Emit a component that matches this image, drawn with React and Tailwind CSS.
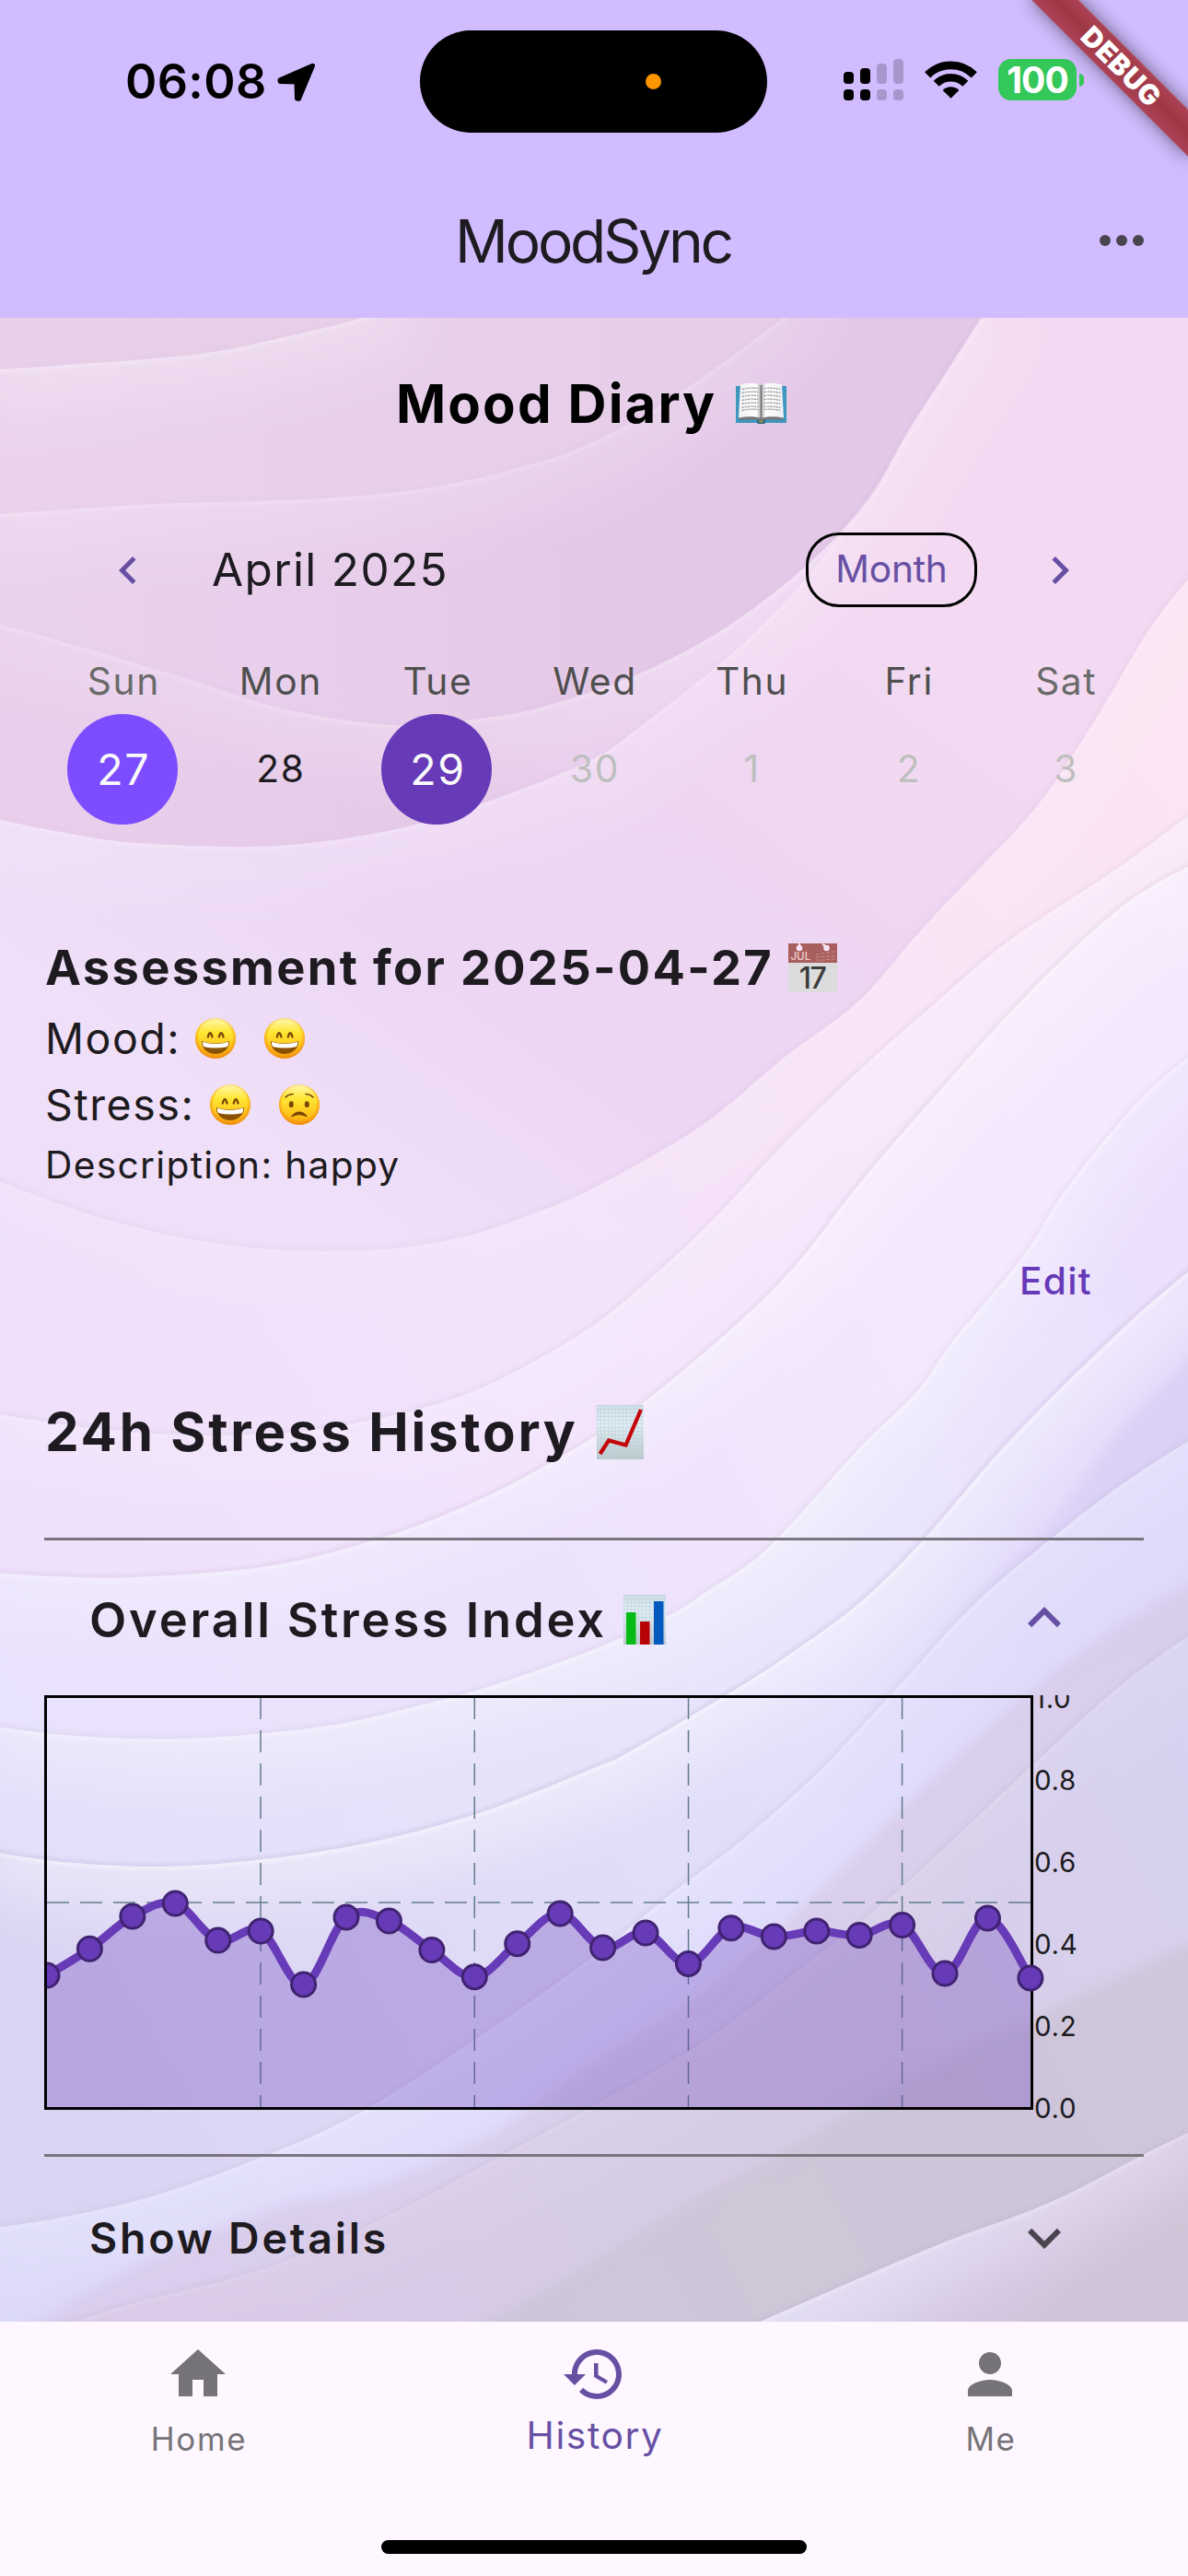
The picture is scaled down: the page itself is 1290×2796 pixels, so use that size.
import { useId } from "react";

/* ---------- wallpaper ---------- */

const smooth = (pts) => {
  let d = `M${pts[0][0]} ${pts[0][1]}`;
  for (let i = 0; i < pts.length - 1; i++) {
    const p0 = pts[i - 1] || pts[i];
    const p1 = pts[i];
    const p2 = pts[i + 1];
    const p3 = pts[i + 2] || p2;
    d += ` C${p1[0] + (p2[0] - p0[0]) / 6} ${p1[1] + (p2[1] - p0[1]) / 6} ${p2[0] - (p3[0] - p1[0]) / 6} ${p2[1] - (p3[1] - p1[1]) / 6} ${p2[0]} ${p2[1]}`;
  }
  return d;
};

// Each sheet starts at its upper edge (left to right) and runs on to the bottom right.
const SHEETS = [
  {
    pts: [[-20, 402], [60, 397], [210, 385], [300, 368], [400, 343], [440, 325]],
    g: [0, 0, 1290, 0],
    c: ["#ebd3ed", "#e8d0ea", "#e6cde8", "#e6cde8"],
    hi: 0.3,
    sh: 0.02,
  },
  {
    pts: [[-20, 559], [60, 554], [170, 547], [350, 541], [480, 527], [600, 497], [680, 462], [755, 415], [850, 345], [880, 318]],
    g: [0, 600, 900, 560],
    c: ["#ead3ed", "#e8cfeb", "#e5cae8", "#e3c8e7"],
    hi: 0.22,
    sh: 0.02,
  },
  {
    pts: [[-20, 672], [80, 700], [200, 736], [310, 770], [430, 787], [520, 780], [590, 767], [690, 733], [790, 680], [880, 610], [944, 540], [985, 470], [1030, 400], [1075, 330]],
    g: [0, 800, 1290, 480],
    c: ["#e9cfeb", "#e6cbe9", "#eed6f1", "#f4daf1"],
    hi: 0.22,
    sh: 0.02,
  },
  {
    pts: [[-20, 885], [60, 902], [150, 915], [300, 918], [430, 900], [530, 870], [640, 826], [700, 785], [800, 705], [870, 634], [910, 584], [946, 540], [987, 470], [1032, 400], [1077, 330]],
    g: [400, 1300, 900, 600],
    c: ["#f0dff8", "#ecd6f3", "#efd7f2", "#f3daf2"],
    hi: 0.2,
    sh: 0.02,
  },
  {
    pts: [[-20, 1275], [120, 1325], [260, 1353], [400, 1357], [500, 1343], [577, 1318], [645, 1289], [760, 1223], [851, 1148], [933, 1086], [1003, 1006], [1066, 940], [1130, 870], [1190, 780], [1250, 680], [1310, 605]],
    g: [100, 1560, 1200, 780],
    c: ["#f0e0fa", "#f3e2fa", "#f7e3f7", "#fbe5f4"],
    hi: 0.08,
    sh: 0.04,
  },
  {
    pts: [[-20, 1532], [100, 1550], [220, 1558], [340, 1552], [460, 1528], [543, 1497], [645, 1438], [727, 1369], [781, 1317], [851, 1242], [933, 1162], [1003, 1100], [1097, 1020], [1217, 940], [1310, 870]],
    g: [100, 1700, 1250, 900],
    c: ["#efe1fb", "#f3e4fc", "#f7e7fb", "#fae8f9"],
    hi: 0.16,
    sh: 0.06,
  },
  {
    pts: [[-20, 1706], [60, 1711], [145, 1712], [291, 1700], [412, 1670], [509, 1633], [606, 1583], [698, 1523], [810, 1428], [871, 1365], [933, 1285], [1015, 1190], [1118, 1077], [1221, 982], [1310, 930]],
    g: [0, 1820, 1290, 1050],
    c: ["#e9e2fc", "#ece2fc", "#f4e7fd", "#f6e9fd"],
    hi: 0.35,
    sh: 0.08,
  },
  {
    pts: [[-20, 1872], [80, 1884], [206, 1887], [350, 1874], [452, 1852], [533, 1830], [645, 1790], [727, 1753], [768, 1727], [834, 1680], [933, 1572], [995, 1511], [1036, 1454], [1110, 1365], [1159, 1289], [1241, 1190], [1310, 1132]],
    g: [0, 1950, 1290, 1300],
    c: ["#e3dffa", "#e6e2fa", "#eae6fc", "#ecdffc"],
    hi: 0.4,
    sh: 0.06,
  },
  {
    pts: [[-20, 2008], [80, 2022], [206, 2025], [370, 2006], [514, 1970], [645, 1919], [686, 1900], [785, 1842], [851, 1800], [933, 1740], [1003, 1671], [1097, 1563], [1221, 1440], [1310, 1364]],
    g: [0, 2250, 1290, 1500],
    c: ["#dad4f3", "#dfdaf6", "#e4e1fb", "#e5dafa"],
    hi: 0.5,
    sh: 0.1,
  },
  {
    pts: [[780, 2010], [892, 1916], [974, 1830], [1056, 1735], [1139, 1655], [1215, 1555], [1310, 1460]],
    g: [780, 1900, 1290, 1550],
    c: ["#dfdbf8", "#e0dbf9", "#dcd2f7", "#dad0f5"],
    hi: 0,
    sh: 0,
    soft: true,
  },
  {
    pts: [[-20, 2420], [60, 2408], [165, 2384], [288, 2340], [391, 2293], [514, 2215], [645, 2123], [727, 2057], [810, 1994], [892, 1920], [974, 1832], [1056, 1743], [1134, 1676], [1220, 1610], [1310, 1552]],
    g: [100, 2520, 1290, 1640],
    c: ["#dcdaf8", "#e0dcfc", "#e0dcfb", "#dfdafa"],
    hi: 0.2,
    sh: 0.05,
  },
  {
    pts: [[20, 2530], [144, 2462], [288, 2400], [411, 2372], [535, 2315], [645, 2238], [768, 2160], [892, 2050], [982, 1960], [1080, 1868], [1190, 1780], [1310, 1705]],
    g: [200, 2520, 1290, 1740],
    c: ["#dacded", "#d9cfeb", "#d9cfec", "#d9cdec"],
    hi: 0,
    sh: 0,
    soft: true,
  },
  {
    pts: [[50, 2530], [144, 2500], [288, 2462], [411, 2410], [535, 2345], [645, 2285], [768, 2213], [892, 2119], [982, 2046], [1122, 1915], [1221, 1826], [1310, 1762]],
    g: [200, 2520, 1290, 1900],
    c: ["#dac8e7", "#d7cce6", "#d7cde7", "#d8d2f0"],
    hi: 0.1,
    sh: 0.05,
  },
  {
    pts: [[500, 2535], [645, 2454], [727, 2402], [851, 2334], [995, 2250], [1139, 2182], [1310, 2100]],
    g: [560, 2520, 1290, 2140],
    c: ["#cdc6da", "#cfc6d8", "#cec5d9", "#d0c7dc"],
    hi: 0,
    sh: 0,
    soft: true,
  },
  {
    pts: [[780, 2540], [871, 2500], [1015, 2438], [1139, 2391], [1241, 2339], [1310, 2305]],
    g: [960, 2400, 1100, 2560],
    c: ["#dcd6f0", "#d9d0ec", "#d6c8e3", "#d0c4d8"],
    hi: 0.28,
    sh: 0.04,
  },
];

function Wallpaper() {
  return (
    <svg aria-hidden="true" className="absolute inset-0 h-full w-full" viewBox="0 345 1290 2175" preserveAspectRatio="none">
      <defs>
        <filter id="wide" filterUnits="userSpaceOnUse" x="-200" y="100" width="1700" height="2700">
          <feGaussianBlur stdDeviation="28" />
        </filter>
        <filter id="line" filterUnits="userSpaceOnUse" x="-200" y="100" width="1700" height="2700">
          <feGaussianBlur stdDeviation="1.8" />
        </filter>
        <filter id="mist" filterUnits="userSpaceOnUse" x="-200" y="100" width="1700" height="2700">
          <feGaussianBlur stdDeviation="8" />
        </filter>
        <linearGradient id="base" gradientUnits="userSpaceOnUse" x1="0" y1="0" x2="1290" y2="0">
          <stop offset="0" stopColor="#e8d0e9" />
          <stop offset="0.5" stopColor="#e7cfe8" />
          <stop offset="0.75" stopColor="#ebd3ed" />
          <stop offset="1" stopColor="#f4daf1" />
        </linearGradient>
        {SHEETS.map((s, i) => (
          <linearGradient key={i} id={`g${i}`} gradientUnits="userSpaceOnUse" x1={s.g[0]} y1={s.g[1]} x2={s.g[2]} y2={s.g[3]}>
            {s.c.map((c, k) => (
              <stop key={k} offset={k / 3} stopColor={c} />
            ))}
          </linearGradient>
        ))}
        {SHEETS.map((s, i) => (
          <clipPath key={i} id={`c${i}`}>
            <path d={`${smooth(s.pts)} L1400 300 L1400 2700 L-60 2700 Z`} />
          </clipPath>
        ))}
      </defs>
      <rect x="0" y="345" width="1290" height="2175" fill="url(#base)" />
      {SHEETS.map((s, i) => {
        const d = smooth(s.pts);
        return (
          <g key={i}>
            {s.sh > 0 && <path d={d} fill="none" stroke="#7a6490" strokeOpacity={s.sh} strokeWidth="8" filter="url(#line)" />}
            <path d={`${d} L1400 300 L1400 2700 L-60 2700 Z`} fill={`url(#g${i})`} filter={s.soft ? "url(#mist)" : undefined} />
            {s.hi > 0 && (
              <g clipPath={`url(#c${i})`}>
                <path d={d} fill="none" stroke="#fff" strokeOpacity={s.hi * 0.75} strokeWidth="90" filter="url(#wide)" />
                <path d={d} fill="none" stroke="#fff" strokeOpacity={s.hi * 0.7} strokeWidth="8" filter="url(#line)" />
              </g>
            )}
          </g>
        );
      })}
    </svg>
  );
}

/* ---------- icons ---------- */

function Icon({ d, className }) {
  return (
    <svg viewBox="0 0 24 24" className={className} fill="currentColor" aria-hidden="true">
      <path d={d} />
    </svg>
  );
}

const LEFT = "M15.41 7.41 14 6l-6 6 6 6 1.41-1.41L10.83 12z";
const RIGHT = "M10 6 8.59 7.41 13.17 12l-4.58 4.59L10 18l6-6z";
const UP = "m12 8-6 6 1.41 1.41L12 10.83l4.59 4.58L18 14z";
const DOWN = "M16.59 8.59 12 13.17 7.41 8.59 6 10l6 6 6-6z";
const HOME = "M10 20v-6h4v6h5v-8h3L12 3 2 12h3v8z";
const HISTORY =
  "M13 3c-4.97 0-9 4.03-9 9H1l3.89 3.89.07.14L9 12H6c0-3.87 3.13-7 7-7s7 3.13 7 7-3.13 7-7 7c-1.93 0-3.68-.79-4.94-2.06l-1.42 1.42C8.27 19.99 10.51 21 13 21c4.97 0 9-4.03 9-9s-4.03-9-9-9zm-1 5v5l4.28 2.54.72-1.21-3.5-2.08V8H12z";
const PERSON =
  "M12 12c2.21 0 4-1.79 4-4s-1.79-4-4-4-4 1.79-4 4 1.79 4 4 4zm0 2c-2.67 0-8 1.34-8 4v2h16v-2c0-2.66-5.33-4-8-4z";

function Book({ className }) {
  return (
    <svg viewBox="0 0 55 44" className={className} role="img" aria-label="open book">
      <defs>
        <linearGradient id="pageL" x1="0" x2="1">
          <stop offset="0" stopColor="#f2f2f4" />
          <stop offset="0.8" stopColor="#fdfdfd" />
          <stop offset="1" stopColor="#a9a9ad" />
        </linearGradient>
        <linearGradient id="pageR" x1="0" x2="1">
          <stop offset="0" stopColor="#a9a9ad" />
          <stop offset="0.2" stopColor="#fdfdfd" />
          <stop offset="1" stopColor="#f0f0f2" />
        </linearGradient>
      </defs>
      <path d="M0 3h55v40H32l-1 1h-7l-1-1H0z" fill="#3f97bd" />
      <path d="M23 40h9v2.500l-2 1.500h-5l-2-1.500z" fill="#1f5f80" />
      <path d="M25 41h5v1.500h-5z" fill="#b3a02c" />
      <path d="M3 37l2-2h21l1.500 3 1.500-3h21l2 2-1 2.500H31l-2 1.500h-3l-2-1.500H4z" fill="#77777b" />
      <path d="M5 1.500C12-.3 22-.6 27.500 2v36C22 35.500 11 36 3 37.500z" fill="url(#pageL)" />
      <path d="M50 1.500C43-.3 33-.6 27.500 2v36C33 35.500 44 36 52 37.500z" fill="url(#pageR)" />
      <g stroke="#9a9aa0" strokeWidth="1.200" strokeDasharray="3 0.800 2 0.600">
        {[6, 10, 14, 18, 22, 26, 29].map((y) => (
          <path key={y} d={`M6.500 ${y + 0.5}q9-2 18-1M30.500 ${y - 0.5}q9-1 18 1`} fill="none" />
        ))}
      </g>
      <path d="M27.500 2v36" stroke="#6f6f73" strokeWidth="1.500" />
    </svg>
  );
}

function CalendarEmoji({ className }) {
  return (
    <svg viewBox="0 0 53 53" className={className} role="img" aria-label="calendar">
      <rect width="53" height="53" fill="#dcdcdc" />
      <rect width="53" height="21" fill="#a95f5e" />
      <circle cx="12" cy="5" r="3.300" fill="#f6e4f5" />
      <circle cx="41.500" cy="5" r="3.300" fill="#f6e4f5" />
      <path d="M11 0h2v4h-2zM36 0l4 1 2 4-4-2z" fill="#f6e4f5" />
      <path d="M30 12h4M35.500 11h4M41 10h4M46.500 9h4M30 15h4M35.500 14.500h4M41 14h4M46.500 13.500h4M30 18h4M35.500 18h4M41 17.500h4M46.500 17h4" stroke="#c78e8d" strokeWidth="1.200" />
      <text x="2.500" y="18" fontSize="11.500" fill="#f0d2d2" fontFamily="Inter, sans-serif" fontWeight="500">JUL</text>
      <text x="26" y="48.500" fontSize="32" textAnchor="middle" fill="#3c3c3c" letterSpacing="-1.500" fontFamily="Inter, sans-serif" fontWeight="500">17</text>
    </svg>
  );
}

function Paper({ id }) {
  return (
    <defs>
      <linearGradient id={id} x1="0" y1="0" x2="0" y2="1">
        <stop offset="0" stopColor="#d3dfe6" />
        <stop offset="0.35" stopColor="#e3eef3" />
        <stop offset="1" stopColor="#bfc8ca" />
      </linearGradient>
      <pattern id={`${id}p`} width="4" height="4" patternUnits="userSpaceOnUse">
        <path d="M0 .5h4M.5 0v4" stroke="#a9cbdc" strokeWidth="0.900" opacity="0.500" />
      </pattern>
    </defs>
  );
}

function TrendEmoji({ className }) {
  return (
    <svg viewBox="0 0 51 59" className={className} role="img" aria-label="chart increasing">
      <Paper id="pt" />
      <rect width="51" height="59" fill="url(#pt)" />
      <rect width="51" height="59" fill="url(#ptp)" />
      <path d="M3.500 53 13 38.500 31.500 43.500 48 5" fill="none" stroke="#c40409" strokeWidth="4.200" />
    </svg>
  );
}

function BarsEmoji({ className }) {
  return (
    <svg viewBox="0 0 46 54" className={className} role="img" aria-label="bar chart">
      <Paper id="pb" />
      <rect width="46" height="54" fill="url(#pb)" />
      <rect width="46" height="54" fill="url(#pbp)" />
      <rect x="3" y="19" width="10.500" height="35" fill="#07bb17" />
      <rect x="18" y="29" width="10.500" height="25" fill="#b90206" />
      <rect x="33" y="7" width="10.500" height="47" fill="#0459c0" />
    </svg>
  );
}

function Face({ sad, className }) {
  const id = useId().replace(/[^a-zA-Z0-9]/g, "");
  return (
    <svg viewBox="0 0 44 44" className={className} role="img" aria-label={sad ? "worried face" : "grinning face"}>
      <defs>
        <linearGradient id={id} x1="0" y1="0" x2="0" y2="1">
          <stop offset="0" stopColor="#fff9b0" />
          <stop offset="0.35" stopColor="#ffe733" />
          <stop offset="0.75" stopColor="#ffc31a" />
          <stop offset="1" stopColor="#f79a0c" />
        </linearGradient>
        <radialGradient id={`${id}r`} cx="0.5" cy="0.46" r="0.54">
          <stop offset="0.75" stopColor="#f59a14" stopOpacity="0" />
          <stop offset="1" stopColor="#ee8a10" stopOpacity="0.950" />
        </radialGradient>
      </defs>
      <circle cx="22" cy="22" r="22" fill={`url(#${id})`} />
      <circle cx="22" cy="22" r="22" fill={`url(#${id}r)`} />
      {sad ? (
        <g fill="none" stroke="#7b4708" strokeLinecap="round">
          <path d="M7 14q3.500-3.500 8-3.500M37 14q-3.500-3.500-8-3.500" strokeWidth="1.700" />
          <ellipse cx="13.300" cy="21.700" rx="2.500" ry="3.400" fill="#7b4708" stroke="none" />
          <ellipse cx="30.300" cy="21.700" rx="2.500" ry="3.400" fill="#7b4708" stroke="none" />
          <path d="M14 34.500q8-8.500 16 0q-8-4-16 0" strokeWidth="1.500" fill="#7b4708" />
        </g>
      ) : (
        <g>
          <path d="M13.800 20.500q2.300-8.500 4.700 0M25.800 20.500q2.300-8.500 4.700 0" fill="none" stroke="#7b4708" strokeWidth="2.300" strokeLinecap="round" />
          <path d="M7 25q15 5 30 0c.5 8.500-7 14-15 14S6.500 33.500 7 25z" fill="#8b5206" />
          <path d="M8 25.700q14 4.500 28 0c.2 2.500-.4 4.300-1.500 5.600q-12.500 2.500-25 0C8.400 30 7.800 28.200 8 25.700z" fill="#fff" />
        </g>
      )}
    </svg>
  );
}

/* ---------- header ---------- */

function StatusBar() {
  return (
    <div className="flex h-[177px] items-center pl-[136px]">
      <span className="w-[165px] text-[52px] leading-none font-semibold tracking-[0.400px] text-black">06:08</span>
      <svg viewBox="0 0 42 42" className="h-[42px] w-[42px]" aria-hidden="true">
        <path d="M38.500 3.200 3 18.700 3.200 20.600 21 21 21.500 39 23.500 39.300Z" stroke="#000" strokeWidth="5" strokeLinejoin="round" />
      </svg>
      <div className="ml-[113px] flex h-[111px] w-[377px] items-center rounded-full bg-black pl-[245px]">
        <span className="h-[17px] w-[17px] rounded-full bg-[#ff9500]" />
      </div>
      <div className="mb-1 ml-[83px] flex h-[45px] w-[65px] items-end justify-between">
        {[
          ["h-[13px]", "bg-black"],
          ["h-[17px]", "bg-black"],
          ["h-[22px]", "bg-[#a996cd]"],
          ["h-[27px]", "bg-[#a996cd]"],
        ].map(([h, c]) => (
          <div key={h} className="flex w-[11px] flex-col gap-[6px]">
            <span className={`${h} ${c} w-full rounded-[4px]`} />
            <span className={`${c} h-[12px] w-full rounded-[4px]`} />
          </div>
        ))}
      </div>
      <svg viewBox="0 0 57 42" className="mb-[5px] ml-[23px] h-[42px] w-[57px]" aria-hidden="true">
        <g fill="none" stroke="#000" strokeWidth="8.600">
          <path d="M3.200 16.400a35.600 35.600 0 0 1 50.600 0" />
          <path d="M12.700 25.800a22.300 22.300 0 0 1 31.600 0" />
        </g>
        <path d="M28.500 41.800 19.700 33a12.400 12.400 0 0 1 17.600 0z" />
      </svg>
      <div className="mb-1 ml-[23px] flex h-[45px] w-[85px] items-center justify-center rounded-[14px] bg-[#34c759] text-[39px] leading-none font-bold tracking-[-0.900px] text-white">
        100
      </div>
      <span className="mb-1 ml-[3px] h-[14px] w-[5px] rounded-r-full bg-[#34c759]" />
    </div>
  );
}

function DebugBanner() {
  return (
    <div className="absolute top-0 left-[1290px] h-0 w-0 origin-top-left rotate-45">
      <div className="absolute top-[84px] left-[-120px] flex h-[36px] w-[240px] items-center justify-center bg-linear-to-b from-[#ac4356] via-[#9e3744] to-[#ac4356] text-[30px] leading-none font-black tracking-[0.800px] text-white shadow-[0_0_20px_rgba(0,0,0,0.500)]">
        DEBUG
      </div>
    </div>
  );
}

function Header() {
  return (
    <header className="h-[345px] bg-[#d1bcff]">
      <StatusBar />
      <div className="flex h-[168px] items-center pl-[494px] text-[#1d1b20]">
        <h1 className="w-[700px] pt-[2px] text-[64px] leading-none font-normal tracking-[-3.150px]">MoodSync</h1>
        <div className="flex gap-[6px]">
          <span className="h-[12px] w-[12px] rounded-full bg-[#49454f]" />
          <span className="h-[12px] w-[12px] rounded-full bg-[#49454f]" />
          <span className="h-[12px] w-[12px] rounded-full bg-[#49454f]" />
        </div>
      </div>
    </header>
  );
}

/* ---------- calendar ---------- */

const WEEK = [
  { day: "Sun", n: "27", head: "text-[#6a6a6a]", cell: "h-[120px] w-[120px] bg-[#7c4dff] text-[46.500px] text-[#fafafa]" },
  { day: "Mon", n: "28", head: "text-[#4f4f4f]", cell: "text-[40.700px] text-[#1d1b20]" },
  { day: "Tue", n: "29", head: "text-[#4f4f4f]", cell: "h-[120px] w-[120px] bg-[#673ab7] text-[46.500px] text-[#fafafa]" },
  { day: "Wed", n: "30", head: "text-[#4f4f4f]", cell: "text-[40.700px] text-[#bfbfbf]" },
  { day: "Thu", n: "1", head: "text-[#4f4f4f]", cell: "text-[40.700px] text-[#bfbfbf]" },
  { day: "Fri", n: "2", head: "text-[#4f4f4f]", cell: "text-[40.700px] text-[#bfbfbf]" },
  { day: "Sat", n: "3", head: "text-[#6a6a6a]", cell: "text-[40.700px] text-[#bfbfbf]" },
];

function Calendar() {
  return (
    <section>
      <div className="flex h-[175px] items-center pl-[109px] text-[#6750a4]">
        <Icon d={LEFT} className="h-[60px] w-[60px]" />
        <span className="ml-[61px] w-[645px] pt-px text-[49.500px] leading-none tracking-[1.350px] text-[#1d1b20]">April 2025</span>
        <button className="flex h-[81px] w-[186px] items-center justify-center rounded-[36px] border-[3px] border-black text-[40.700px] leading-none tracking-[-0.250px]">
          Month
        </button>
        <Icon d={RIGHT} className="ml-[60px] h-[60px] w-[60px]" />
      </div>
      <div className="mx-12 grid grid-cols-7">
        {WEEK.map((d) => (
          <div key={d.day} className="flex flex-col items-center">
            <span className={`${d.head} flex h-[66px] items-center pt-[2px] pl-[2px] text-[40.700px] leading-none tracking-[1.600px]`}>{d.day}</span>
            <div className="flex h-[126px] items-center">
              <span className={`${d.cell} flex items-center justify-center rounded-full pl-[2px] leading-none tracking-[1.600px]`}>{d.n}</span>
            </div>
          </div>
        ))}
      </div>
    </section>
  );
}

/* ---------- chart ---------- */

const LEVELS = [
  2144, 2115.3, 2080, 2066, 2106, 2096, 2154, 2081, 2085, 2116.6, 2145.7, 2109.7, 2077, 2114, 2098, 2131.4, 2092.7,
  2102, 2096, 2100.5, 2089.5, 2142, 2082, 2147,
].map((y, i) => ({ x: 3 + i * 46.43, y: y - 1840 }));

const curve = (pts) => {
  let d = `M${pts[0].x} ${pts[0].y}`;
  let t = { x: 0, y: 0 };
  for (let i = 1; i < pts.length; i++) {
    const a = pts[i - 1];
    const b = pts[i];
    const n = pts[i + 1] || b;
    const c1 = { x: a.x + t.x, y: a.y + t.y };
    t = { x: ((n.x - a.x) / 2) * 0.35, y: ((n.y - a.y) / 2) * 0.35 };
    d += ` C${c1.x} ${c1.y} ${b.x - t.x} ${b.y - t.y} ${b.x} ${b.y}`;
  }
  return d;
};

function StressChart() {
  const d = curve(LEVELS);
  return (
    <div className="flex h-[450px] pl-12">
      <svg viewBox="0 0 1074 450" className="h-[450px] w-[1074px] shrink-0 overflow-visible" role="img" aria-label="Overall stress index">
        <defs>
          <clipPath id="plot">
            <rect x="3" y="0" width="1120" height="448" />
          </clipPath>
        </defs>
        <g stroke="#607d8b" strokeWidth="1.500" strokeDasharray="24 12">
          {[235, 467.3, 699.5, 931.6].map((x) => (
            <path key={x} d={`M${x} 2V448`} />
          ))}
          <path d="M3 225H1072" />
        </g>
        <rect x="1.500" y="1.500" width="1071" height="447" fill="none" stroke="#000" strokeWidth="3" />
        <g clipPath="url(#plot)">
          <path d={`${d} V447 H3 Z`} fill="#673ab7" fillOpacity="0.300" />
          <path d={d} fill="none" stroke="#673ab7" strokeWidth="9" />
          {LEVELS.map((p) => (
            <circle key={p.x} cx={p.x} cy={p.y} r="13" fill="#673ab7" stroke="#3f2370" strokeWidth="3" />
          ))}
        </g>
      </svg>
      <div className="h-[480px] overflow-hidden pl-px">
        <div className="-mt-[41px] flex flex-col text-[29.500px] leading-none tracking-[0.650px]">
          {["1.0", "0.8", "0.6", "0.4", "0.2", "0.0"].map((v) => (
            <span key={v} className="flex h-[89px] items-center">
              {v}
            </span>
          ))}
        </div>
      </div>
    </div>
  );
}

/* ---------- page ---------- */

function Diary() {
  return (
    <main className="relative h-[2175px] overflow-hidden text-[#1d1b20]">
      <Wallpaper />
      <div className="relative">
        <div className="flex h-[186px] items-center pl-[430px] text-black">
          <h2 className="w-[369px] text-[58.200px] leading-none font-bold tracking-[2.100px]">Mood Diary</h2>
          <Book className="h-[44px] w-[55px]" />
        </div>
        <Calendar />
        <section className="pl-[49px]">
          <div className="mt-[106px] flex h-[92px] items-center">
            <h3 className="w-[807px] text-[52.400px] leading-none font-bold tracking-[2.330px] whitespace-nowrap">Assessment for 2025-04-27</h3>
            <CalendarEmoji className="h-[53px] w-[53px] overflow-visible" />
          </div>
          <div className="flex h-[62px] items-center">
            <span className="w-[163px] text-[46.500px] leading-none tracking-[1.500px]">Mood:</span>
            <Face className="h-[44px] w-[44px]" />
            <Face className="ml-[31px] h-[44px] w-[44px]" />
          </div>
          <div className="flex h-[82px] items-center">
            <span className="w-[179px] text-[46.500px] leading-none tracking-[1.600px]">Stress:</span>
            <Face className="h-[44px] w-[44px]" />
            <Face sad className="ml-[31px] h-[44px] w-[44px]" />
          </div>
          <p className="flex h-[48px] items-center pt-[2px] text-[40.700px] leading-none tracking-[1.300px]">Description: happy</p>
        </section>
        <div className="flex h-[205px] items-center pt-[2px] pl-[1107px]">
          <button className="text-[40.700px] leading-none font-medium tracking-[1.300px] text-[#673ab7]">Edit</button>
        </div>
        <div className="flex h-[123px] items-center pl-[49px]">
          <h2 className="w-[599px] text-[58.200px] leading-none font-bold tracking-[2.800px] whitespace-nowrap">24h Stress History</h2>
          <TrendEmoji className="h-[59px] w-[51px]" />
        </div>
        <div className="mx-12 mt-[53px] h-[3px] bg-[#79747e]" />
        <div className="flex h-[168px] items-center pl-[97px]">
          <h3 className="w-[580px] pt-1 text-[52.400px] leading-none font-[560] tracking-[2.850px] whitespace-nowrap">Overall Stress Index</h3>
          <BarsEmoji className="mt-1 h-[54px] w-[46px]" />
          <Icon d={UP} className="ml-[375px] h-[72px] w-[72px] text-[#6750a4]" />
        </div>
        <StressChart />
        <div className="mx-12 mt-12 h-[3px] bg-[#79747e]" />
        <div className="flex h-[176px] items-center pl-[97px]">
          <h3 className="w-[1001px] text-[46.500px] leading-none font-[560] tracking-[2.800px]">Show Details</h3>
          <Icon d={DOWN} className="h-[72px] w-[72px] text-[#49454f]" />
        </div>
      </div>
    </main>
  );
}

function BottomNav() {
  return (
    <nav className="flex h-[276px] flex-col items-center bg-[#fef7ff]">
      <div className="grid h-[237px] w-full grid-cols-3 pt-[21px]">
        <div className="flex flex-col items-center text-[#757377]">
          <Icon d={HOME} className="h-[72px] w-[72px]" />
          <span className="mt-[17px] pl-[2px] text-[34.900px] leading-none tracking-[1.700px]">Home</span>
        </div>
        <div className="flex flex-col items-center text-[#6750a4]">
          <Icon d={HISTORY} className="h-[72px] w-[72px]" />
          <span className="mt-[11px] pl-[2px] text-[40.700px] leading-none tracking-[1.600px]">History</span>
        </div>
        <div className="flex flex-col items-center text-[#757377]">
          <Icon d={PERSON} className="h-[72px] w-[72px]" />
          <span className="mt-[17px] pl-[2px] text-[34.900px] leading-none tracking-[1.500px]">Me</span>
        </div>
      </div>
      <div className="h-[15px] w-[462px] rounded-full bg-black" />
    </nav>
  );
}

export default function App() {
  return (
    <div className="relative flex h-[2796px] w-[1290px] flex-col overflow-hidden font-['Inter',sans-serif]">
      <Header />
      <Diary />
      <BottomNav />
      <DebugBanner />
    </div>
  );
}
